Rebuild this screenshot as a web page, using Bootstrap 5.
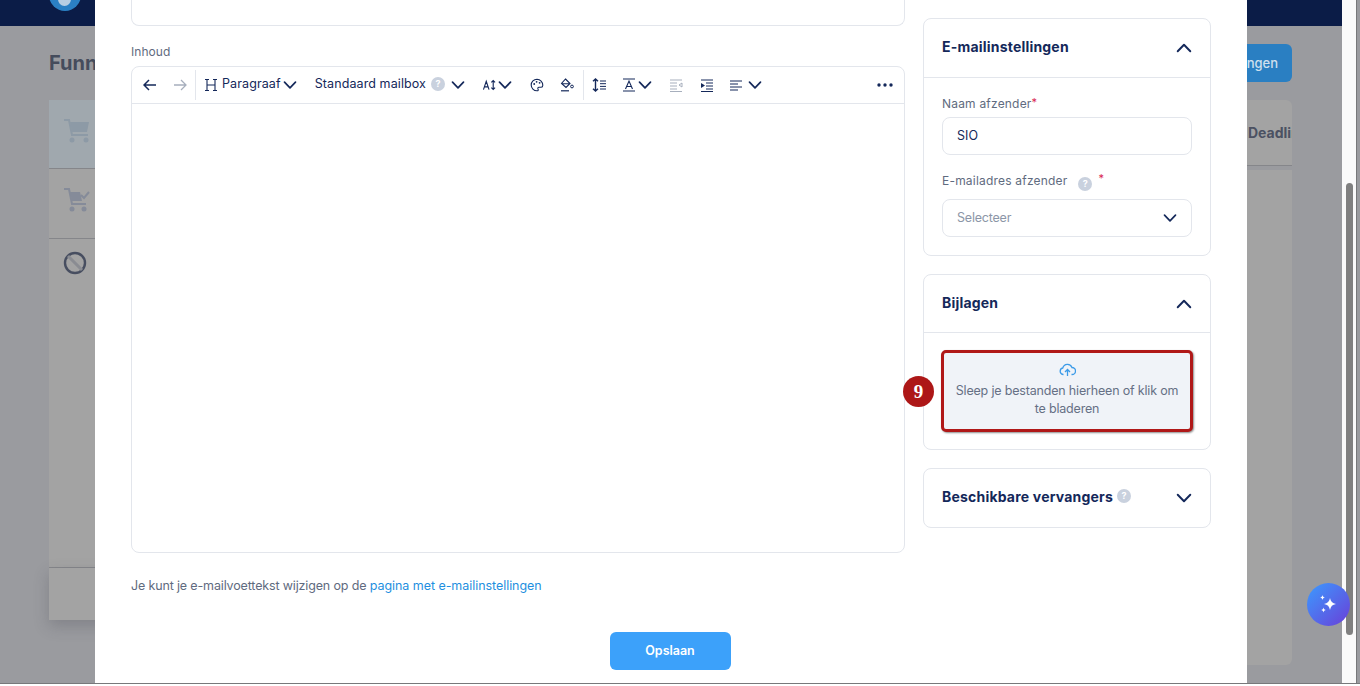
<!DOCTYPE html>
<html lang="nl">
<head>
<meta charset="utf-8">
<title>Funnel</title>
<link href="https://cdn.jsdelivr.net/npm/bootstrap@5.3.0/dist/css/bootstrap.min.css" rel="stylesheet">
<style>
html,body{height:686px;overflow:hidden;background:#fff}
body{font-family:"Inter","Liberation Sans",sans-serif;color:#14285a;font-size:12.5px}
.stage{position:relative;width:1360px;height:684px;overflow:hidden;background:#9a9b9f;border-bottom:1px solid #77787a}
.topstrip{height:26px;background:#0b1c47;width:1342px;position:relative;overflow:hidden}
.logo-dot{position:absolute;left:49px;top:-21px;width:32px;height:32px;border-radius:50%;background:#2b80c4}
.logo-dot::after{content:"";position:absolute;left:9px;top:13px;width:13px;height:14px;border-radius:50%;background:#b9cfe3}
.under{width:1342px;padding:18px 50px 0 49px}
.under-title{font-weight:700;font-size:20px;color:#454c5c;line-height:38px}
.under-btn{background:#2a7fc2;color:#cfe0ee;font-weight:500;font-size:13px;width:120px;height:38px;border-radius:6px;text-align:right;padding-right:14px;line-height:38px}
.under-body{margin-top:18px;height:565px}
.under-left{width:260px}
.urow{border-bottom:1px solid #85868a;background:#a3a3a3;padding:18px 14px}
.urow1{height:69px;background:#a0a8ae}
.urow2{height:70px}
.urow3{height:329px;padding-top:12px}
.urow4{height:52px;border:0;box-shadow:0 6px 14px rgba(60,60,70,.25)}
.under-right{width:300px}
.utab{height:66px;background:#a3a3a3;border-radius:6px 6px 0 0;border-bottom:1px solid #85868a;padding-left:256px;font-weight:700;font-size:14px;color:#4b5162;line-height:66px;overflow:hidden;white-space:nowrap}
.upanel{height:495px;margin-top:4px;background:#a3a3a3;border-radius:0 0 6px 6px}
.dlg{position:absolute;left:95px;top:0;width:1152px;height:683px;background:#fff;padding:0 36px}
.cols{gap:18px}
.main-col{width:774px}
.side-col{width:288px;padding-top:18px}
.stub{height:26px;border:1px solid #e3e6ec;border-top:0;border-radius:0 0 8px 8px}
.lbl{color:#5f6b80;font-size:12px;line-height:16px;margin:18px 0 6px;letter-spacing:.05px}
.editor{height:487px;border:1px solid #e3e6ec;border-radius:8px}
.tbar{height:37px;border-bottom:1px solid #e3e6ec;padding-left:3px;padding-right:7px}
.tb{display:flex;align-items:center;justify-content:center;width:30px;height:100%;flex:none}
.tb-w28{width:28px}
.tb-sep{width:1px;height:30px;background:#e3e6ec;flex:none}
.tb-txt{font-size:12.5px;letter-spacing:.1px;color:#14285a;white-space:nowrap;margin-top:-2px}
.tb-txt svg{margin-top:2px}
.tb-par{margin-left:8px}
.tb-par .chev{margin-left:2px}
.tb-mail{margin-left:18px;gap:5px}
.tb-mail .chev{margin-left:1px}
.tb-size{margin-left:18px}
.tb-size .chev{margin-left:2px}
.tb-pal{margin-left:10px}
.tb-sp1{margin-left:1px}
.tb-back6{margin-left:-6px}
.tb-sp9{margin-left:9px}
.tb-back2{margin-left:-2px}
.hint{display:inline-flex;align-items:center;justify-content:center;width:14px;height:14px;border-radius:50%;background:#c9d1de;color:#fff;font-size:9px;font-weight:700;flex:none}
.note{color:#5f6b80;font-size:12.5px;margin-top:25px;line-height:16px;letter-spacing:-.15px}
.note a{color:#1f8fe0;text-decoration:none;letter-spacing:-.05px}
.save-wrap{margin-top:38px;padding-right:2px}
.save{width:121px;height:38px;background:#3ca1fa;border:0;color:#fff;border-radius:6px;font-size:12.5px;font-weight:600}
.sbox{border:1px solid #e3e6ec;border-radius:8px;margin-bottom:18px}
.sbox-head{height:58px;padding:0 18px 0;font-size:14px;font-weight:700;color:#14285a;letter-spacing:.2px}
.head-short{height:57px}
.head-txt{margin-top:-4px}
.head-short .head-txt{margin-top:-2px}
.sbox-body{border-top:1px solid #e3e6ec;padding:18px 18px}
.body-drop{padding:17px}
.flabel{color:#5f6b80;font-size:12px;line-height:16px;margin-bottom:5px;letter-spacing:.2px}
.flabel-2{margin-top:18px;margin-bottom:10px}
.req{color:#d8234f;font-size:11px;position:relative;top:-2px}
.hint-low{margin-left:11px;position:relative;top:3px}
.req-2{margin-left:6px;top:-3px}
.finput{height:38px;border:1px solid #e3e6ec;border-radius:8px;padding:0 14px;font-size:12.5px;color:#14285a}
.ph{color:#8c96a8;letter-spacing:-.2px}
.drop{height:82px;background:#f0f3f8;border:3px solid #b01818;border-radius:5px;box-shadow:1px 1px 2px rgba(0,0,0,.45);color:#667085;font-size:12.5px;letter-spacing:-.18px;line-height:18px;text-align:center;padding:10px 6px 0;position:relative}
.drop svg{margin-bottom:5px}
.marker{position:absolute;left:-41px;top:23px;width:31px;height:31px;border-radius:50%;background:#ad1717;color:#fff;font-family:"Liberation Serif",serif;font-weight:700;font-size:19px;line-height:31px;text-align:center;letter-spacing:0}
.track{position:absolute;left:1342px;top:0;width:15px;height:683px;background:#fafafa;border-right:1px solid #77787a}
.thumb{position:absolute;left:4px;top:183px;width:7px;height:452px;border-radius:4px;background:#808080}
.spark{position:absolute;left:1307px;top:583px;width:43px;height:43px;border-radius:50%;background:linear-gradient(135deg,#3b9bff,#6a3fd8);display:flex;align-items:center;justify-content:center}
.spark svg{margin:-2px 0 0 -1px}
</style>
</head>
<body>
<svg width="0" height="0" class="position-absolute">
<symbol id="dn" viewBox="0 0 14 14"><path d="M1.500 4.200 7 9.800l5.500-5.600" fill="none" stroke="currentColor" stroke-width="1.700" stroke-linecap="round" stroke-linejoin="round"/></symbol>
<symbol id="up" viewBox="0 0 14 14"><path d="M1.500 9.800 7 4.200l5.500 5.600" fill="none" stroke="currentColor" stroke-width="1.700" stroke-linecap="round" stroke-linejoin="round"/></symbol>
</svg>
<div class="stage">
  <div class="topstrip"><div class="logo-dot"></div></div>
  <div class="under">
    <div class="d-flex justify-content-between">
      <div class="under-title">Funnel</div>
      <div class="under-btn">Instellingen</div>
    </div>
    <div class="under-body d-flex justify-content-between">
      <div class="under-left">
        <div class="urow urow1"><svg width="28" height="26" viewBox="0 0 28 26"><path d="M1 2h5l3 15h16" fill="none" stroke="#8d9aa6" stroke-width="2"/><path d="M7 4h19l-2 10H9z" fill="#8d9aa6"/><circle cx="9" cy="22" r="2.500" fill="#8d9aa6"/><circle cx="23" cy="22" r="2.500" fill="#8d9aa6"/></svg></div>
        <div class="urow urow2"><svg width="28" height="26" viewBox="0 0 28 26"><path d="M1 2h5l3 15h14" fill="none" stroke="#858b99" stroke-width="2"/><path d="M7 5h10l2 9H9z" fill="#858b99"/><path d="m18 8 3 3 5-6" fill="none" stroke="#858b99" stroke-width="2"/><circle cx="9" cy="22" r="2.500" fill="#858b99"/><circle cx="21" cy="22" r="2.500" fill="#858b99"/></svg></div>
        <div class="urow urow3"><svg width="24" height="24" viewBox="0 0 24 24"><circle cx="12" cy="12" r="10" fill="none" stroke="#474e60" stroke-width="2.400"/><path d="m5 5 14 14" stroke="#8a8c92" stroke-width="3"/></svg></div>
        <div class="urow urow4"></div>
      </div>
      <div class="under-right">
        <div class="utab">Deadlines</div>
        <div class="upanel"></div>
      </div>
    </div>
  </div>

  <div class="dlg">
    <div class="d-flex cols">
      <div class="main-col">
        <div class="stub"></div>
        <div class="lbl">Inhoud</div>
        <div class="editor">
          <div class="tbar d-flex align-items-center">
            <span class="tb"><svg width="14" height="12" viewBox="0 0 14 12"><path d="M13 6H1.500M6 1 1 6l5 5" fill="none" stroke="#14285a" stroke-width="1.500"/></svg></span>
            <span class="tb"><svg width="14" height="12" viewBox="0 0 14 12"><path d="M1 6h11.500M8 1l5 5-5 5" fill="none" stroke="#a7afbd" stroke-width="1.300"/></svg></span>
            <span class="tb-sep"></span>
            <span class="d-flex align-items-center tb-txt tb-par"><svg width="14" height="14" viewBox="0 0 14 14" class="me-1"><path d="M3 1.500v11M11 1.500v11M3 7h8M1 1.500h4M9 1.500h4M1 12.500h4M9 12.500h4" fill="none" stroke="#14285a" stroke-width="1.100"/></svg>Paragraaf<svg width="14" height="14" class="chev"><use href="#dn"/></svg></span>
            <span class="d-flex align-items-center tb-txt tb-mail">Standaard mailbox<span class="hint">?</span><svg width="14" height="14" class="chev"><use href="#dn"/></svg></span>
            <span class="d-flex align-items-center tb-txt tb-size"><svg width="13" height="12" viewBox="1 0 14 12"><path d="M1.500 11 4.500 2l3 9M2.500 8h4M12 1.500v9M10 3.200l2-2 2 2M10 8.800l2 2 2-2" fill="none" stroke="#14285a" stroke-width="1.200"/></svg><svg width="14" height="14" class="chev"><use href="#dn"/></svg></span>
            <span class="tb tb-pal"><svg width="14" height="14" viewBox="0 0 14 14"><path d="M7 1.200a5.800 5.800 0 1 0 0 11.600c1.400 0 1.500-1 1-1.800-.5-.9 0-1.800 1-1.800h2.200c1 0 1.600-.8 1.600-2A6 6 0 0 0 7 1.200z" fill="none" stroke="#14285a" stroke-width="1.100"/><circle cx="4.200" cy="6" r=".9" fill="#14285a"/><circle cx="6.600" cy="3.800" r=".9" fill="#14285a"/><circle cx="9.600" cy="4.800" r=".9" fill="#14285a"/></svg></span>
            <span class="tb"><svg width="14" height="14" viewBox="0 0 14 14"><path d="M5.500 1 10 5.500 6 9.500 1.500 5.500zM1.500 5.800h8.300" fill="none" stroke="#14285a" stroke-width="1.100"/><path d="M1 12.800h8" stroke="#14285a" stroke-width="1.200"/><circle cx="12" cy="8.500" r="1.400" fill="none" stroke="#14285a"/></svg></span>
            <span class="tb-sep tb-sp1"></span>
            <span class="tb"><svg width="14" height="14" viewBox="0 0 14 14"><path d="M3.500 1v12M1 3.200 3.500 1 6 3.200M1 10.800 3.500 13 6 10.800" fill="none" stroke="#14285a" stroke-width="1.400"/><path d="M8 3h6M8 5.700h6M8 8.400h6M8 11h6" stroke="#14285a"/></svg></span>
            <span class="tb"><svg width="16" height="14" viewBox="0 0 16 14"><path d="M2 1h12M2 13h12" stroke="#14285a" stroke-width="1.100"/><path d="M4.500 11 8 3l3.500 8M5.600 8.500h4.800" fill="none" stroke="#14285a" stroke-width="1.100"/></svg></span>
            <span class="d-flex tb-back6"><svg width="14" height="14"><use href="#dn"/></svg></span>
            <span class="tb tb-sp9"><svg width="14" height="13" viewBox="0 0 14 13"><path d="M1 1h12M1 4h7M1 7h7M1 10h7M1 12.500h12" stroke="#a7afbd"/><path d="M13 4 10 6l3 2z" fill="none" stroke="#a7afbd"/></svg></span>
            <span class="tb tb-sp1"><svg width="14" height="13" viewBox="0 0 14 13"><path d="M1 1h12M6 4h7M6 7h7M6 10h7M1 12.500h12" stroke="#14285a"/><path d="m1 4 4 2.500-4 2.500z" fill="#14285a"/></svg></span>
            <span class="tb tb-w28"><svg width="14" height="11" viewBox="0 0 14 11"><path d="M1 1h12M1 4h8M1 7h12M1 10h8" stroke="#14285a"/></svg></span>
            <span class="d-flex tb-back2"><svg width="14" height="14"><use href="#dn"/></svg></span>
            <svg width="16" height="4" viewBox="0 0 16 4" class="ms-auto me-1"><circle cx="2" cy="2" r="1.700" fill="#14285a"/><circle cx="8" cy="2" r="1.700" fill="#14285a"/><circle cx="14" cy="2" r="1.700" fill="#14285a"/></svg>
          </div>
        </div>
        <div class="note">Je kunt je e-mailvoettekst wijzigen op de <a href="#">pagina met e-mailinstellingen</a></div>
      </div>
      <div class="side-col">
        <div class="sbox">
          <div class="sbox-head d-flex align-items-center justify-content-between"><span class="head-txt">E-mailinstellingen</span><svg width="16" height="16"><use href="#up" width="16" height="16"/></svg></div>
          <div class="sbox-body">
            <div class="flabel">Naam afzender<span class="req">*</span></div>
            <div class="finput d-flex align-items-center">SIO</div>
            <div class="flabel flabel-2 d-flex align-items-center">E-mailadres afzender<span class="hint hint-low">?</span><span class="req req-2">*</span></div>
            <div class="finput d-flex align-items-center justify-content-between"><span class="ph">Selecteer</span><svg width="14" height="14"><use href="#dn"/></svg></div>
          </div>
        </div>
        <div class="sbox">
          <div class="sbox-head head-short d-flex align-items-center justify-content-between"><span class="head-txt">Bijlagen</span><svg width="16" height="16"><use href="#up" width="16" height="16"/></svg></div>
          <div class="sbox-body body-drop">
            <div class="drop">
              <span class="marker">9</span>
              <svg width="17" height="14" viewBox="0 0 17 14" class="d-block mx-auto"><path d="M4.500 11.500H4A3.300 3.300 0 0 1 3.800 5 4.800 4.800 0 0 1 13 4.500a3.500 3.500 0 0 1 0 7h-.5M8.500 13V7M6 9l2.500-2.500L11 9" fill="none" stroke="#3c9be8" stroke-width="1.300"/></svg>
              <div>Sleep je bestanden hierheen of klik om te bladeren</div>
            </div>
          </div>
        </div>
        <div class="sbox">
          <div class="sbox-head d-flex align-items-center justify-content-between"><span class="head-txt d-flex align-items-center gap-1">Beschikbare vervangers<span class="hint">?</span></span><svg width="16" height="16"><use href="#dn" width="16" height="16"/></svg></div>
        </div>
      </div>
    </div>
    <div class="save-wrap text-center"><button class="save btn">Opslaan</button></div>
  </div>

  <div class="track"><div class="thumb"></div></div>
  <div class="spark"><svg width="24" height="24" viewBox="0 0 24 24"><path d="M14 6c.6 3.600 2.400 5.400 6 6-3.600.6-5.400 2.400-6 6-.6-3.600-2.400-5.400-6-6 3.600-.6 5.400-2.400 6-6zM6.500 3c.3 1.600 1 2.300 2.500 2.500-1.500.3-2.200 1-2.500 2.500-.3-1.500-1-2.200-2.500-2.500C5.500 5.300 6.200 4.600 6.500 3zM7.500 15.500c.3 1.600 1 2.300 2.500 2.500-1.500.3-2.200 1-2.500 2.500-.3-1.500-1-2.200-2.500-2.500 1.500-.2 2.200-.9 2.500-2.500z" fill="#fff"/></svg></div>
</div>
<script src="https://cdn.jsdelivr.net/npm/bootstrap@5.3.0/dist/js/bootstrap.bundle.min.js"></script>
</body>
</html>
